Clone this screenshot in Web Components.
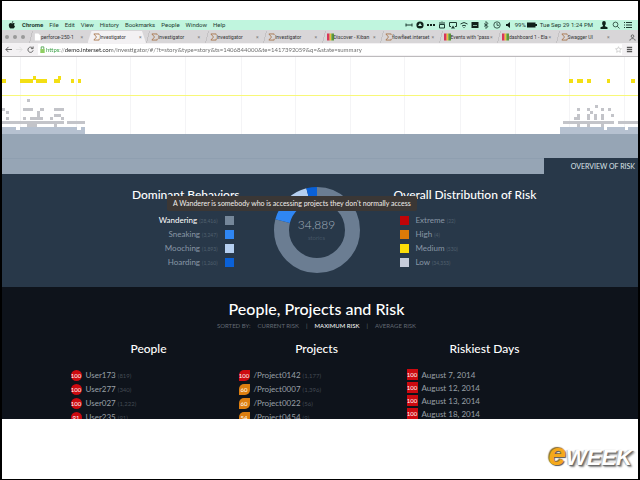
<!DOCTYPE html>
<html lang="en">
<head>
<meta charset="utf-8">
<meta name="viewport" content="width=device-width, initial-scale=1">
<title>Investigator</title>
<style>
  body {
    margin: 0;
    background: #fff;
    font-family: Lato, "Liberation Sans", sans-serif;
  }
</style>
</head>
<body>
<slide-frame>
  <menu-bar></menu-bar>
  <browser-bar></browser-bar>
  <risk-timeline label="OVERVIEW OF RISK"></risk-timeline>
  <risk-overview></risk-overview>
  <risk-ranking></risk-ranking>
  <eweek-logo slot="footer"></eweek-logo>
</slide-frame>

<script>
// Shared helper: every element gets an open shadow root filled with its markup
class BaseElement extends HTMLElement {
    constructor() {
        super();
        this.attachShadow({ mode: 'open' });
    }

    connectedCallback() {
        this.shadowRoot.innerHTML = this.render();
    }
}

// Slide with a black frame, the screen on top and the logo at the bottom
class SlideFrame extends BaseElement {
    render() {
        return `
        <style>
          :host {
            display: flex;
            flex-direction: column;
            box-sizing: border-box;
            height: 100vh;
            border: 1px solid #000;
            border-width: 1px 2px;
            background: #fff;
          }
          .screen {
            flex: 1;
            min-height: 0;
            margin-top: 19px;
            overflow: hidden;
            display: flex;
            flex-direction: column;
          }
          footer {
            box-sizing: border-box;
            height: 60px;
            display: flex;
            align-items: flex-end;
            justify-content: flex-end;
            padding: 0 6px 4px 0;
          }
        </style>
        <main class="screen"><slot></slot></main>
        <footer><slot name="footer"></slot></footer>
      `;
    }
}

// macOS menu bar
class MenuBar extends BaseElement {
    render() {
        const items = ['Chrome', 'File', 'Edit', 'View', 'History', 'Bookmarks', 'People', 'Window', 'Help'];
        return `
        <style>
          :host {
            display: flex;
            flex: none;
            justify-content: space-between;
            align-items: center;
            height: 10px;
            padding: 0 6px;
            background: #c0f5de;
            color: #1d3a30;
            font-family: Roboto, "Liberation Sans", sans-serif;
            font-size: 6px;
            line-height: 10px;
          }
          nav, .status {
            display: flex;
            align-items: center;
            gap: 6px;
          }
          .status { gap: 3px; }
          button {
            all: unset;
            white-space: nowrap;
          }
          button:first-of-type { font-weight: bold; }
          svg {
            width: 8px;
            height: 8px;
            fill: none;
            stroke: #1d3a30;
          }
          .solid { fill: #10211a; stroke: none; }
          .battery { width: 10px; margin-left: -2px; }
          time { margin-right: 4px; }
          time ~ svg + svg { margin-left: 1px; }
        </style>
        <nav aria-label="Menu">
          <svg class="solid" viewBox="0 0 8 8"><path d="M5.3 0C5.3 1 4.6 1.8 3.8 1.8 3.8.9 4.5.2 5.3 0zM6.8 2.7C5.8 3.3 5.9 4.8 7 5.3 6.600 6.500 6 7.600 5.200 7.600c-.5 0-.7-.3-1.200-.3s-.7.3-1.200.3C1.700 7.600.8 5.700.8 4.300c0-1.400 1-2.200 1.900-2.200.6 0 1 .3 1.400.3.4 0 .9-.4 1.600-.4.4 0 .8.2 1.100.7z"/></svg>
          ${items.map(item => `<button type="button">${item}</button>`).join('')}
        </nav>
        <div class="status">
          <svg viewBox="0 0 8 8"><path d="M1 2.500v3M7 2.500v3M1 4h6"/></svg>
          <svg class="solid" viewBox="0 0 8 8"><circle cx="4" cy="4" r="3.600"/><path d="M4 2l2 3H2z" fill="#c0f5de"/></svg>
          <svg class="solid" viewBox="0 0 8 8"><path d="M0 3h2v2H0zM3 3h2v2H3zM6 3h2v2H6z"/></svg>
          <svg viewBox="0 0 8 8"><path d="M1.500 3.500h5v3.500h-5zM2 1v2.500M4 .5v3M6 1v2.500"/></svg>
          <svg viewBox="0 0 8 8"><path d="M2 5.500H.5v-4h7v4H6"/><path d="M4 4.500L6 7.500H2z" fill="#1d3a30" stroke="none"/></svg>
          <svg viewBox="0 0 8 8"><path d="M.5 3Q4 0 7.500 3M2 5Q4 3.500 6 5M3.500 6.500h1"/></svg>
          <svg class="solid" viewBox="0 0 8 8"><path d="M.5 1h7v6h-7z"/><path d="M2 4h4v.7H2z" fill="#c0f5de"/></svg>
          <svg viewBox="0 0 8 8"><path d="M2 2.500l4 3-2 2V.5l2 2-4 3" stroke-width=".8"/></svg>
          <svg viewBox="0 0 8 8"><circle cx="4" cy="4" r="3.200" stroke-width=".8"/><path d="M4 2v2.300h2" stroke-width=".8"/></svg>
          <svg class="solid" viewBox="0 0 8 8"><path d="M2 3h1.500L6 1v6L3.500 5H2z"/></svg>
          <span>99%</span>
          <svg class="battery" viewBox="0 0 10 8"><path d="M0 1.500h8.500v1.500H10v2H8.500v1.500H0z" fill="#10211a" stroke="none"/></svg>
          <time datetime="2015-09-29T13:24">Tue Sep 29 1:24 PM</time>
          <svg class="solid" viewBox="0 0 8 8"><path d="M4 0c2.500 0 2 3.500 1 4.500v.7l2.500 1V8h-7V6.200l2.500-1v-.7C2 3.500 1.500 0 4 0z"/></svg>
          <svg viewBox="0 0 8 8"><circle cx="3.500" cy="3.500" r="2.400" stroke-width=".8"/><path d="M5.300 5.300L7.500 7.500" stroke-width=".8"/></svg>
          <svg viewBox="0 0 8 8"><path d="M0 1.500h1M2 1.500h6M0 4h1M2 4h6M0 6.500h1M2 6.500h6"/></svg>
        </div>
      `;
    }
}

// One browser tab: icon is "page", "sigma" or "bars"
class BrowserTab extends BaseElement {
    render() {
        const icons = {
            page: '<path d="M1 0h4l2 2v6H1z" fill="#fff"/>',
            sigma: '<path d="M7 1.500V.5H1L4 4 1 7.500h6V6" fill="none" stroke="#a8764c"/>',
            bars: '<path d="M0 0h3v8H0z" fill="#d8365a"/><path d="M3 0h2v8H3z" fill="#e9c33a"/><path d="M5 0h3v8H5z" fill="#5a9a3a"/>',
        };
        return `
        <style>
          :host {
            display: flex;
            flex: 1 1 0;
            min-width: 0;
            align-items: center;
            box-sizing: border-box;
            padding: 0 2px 0 5px;
            background: linear-gradient(105deg, transparent 3px, #c4c2c4 3px, #c4c2c4 4px, transparent 4px);
          }
          :host([active]) {
            background: #f3f1f3;
            clip-path: polygon(4px 0, calc(100% - 4px) 0, 100% 100%, 0 100%);
          }
          button { all: unset; }
          .title {
            display: flex;
            flex: 1;
            min-width: 0;
            align-items: center;
            overflow: hidden;
            white-space: nowrap;
          }
          svg { flex: none; width: 7px; height: 8px; }
          .close { width: 5px; color: #777; }
        </style>
        <button type="button" class="title">
          <svg viewBox="0 0 8 8">${icons[this.getAttribute('icon')]}</svg>
          <span><slot></slot></span>
        </button>
        <button type="button" class="close" aria-label="Close tab">×</button>
      `;
    }
}

// Tab strip and address bar
class BrowserBar extends BaseElement {
    render() {
        return `
        <style>
          :host {
            display: block;
            flex: none;
            border-bottom: 1px solid #bdbbbd;
            color: #333;
            font-family: Roboto, "Liberation Sans", sans-serif;
            font-size: 5px;
            line-height: 12px;
          }
          .tabs {
            display: flex;
            height: 13px;
            padding: 1px 2px 0 3px;
            box-sizing: border-box;
            background: #d8d6d8;
          }
          .lights {
            display: flex;
            align-items: center;
            gap: 4px;
            width: 24px;
          }
          .lights i {
            width: 4px;
            height: 4px;
            border-radius: 50%;
            background: #999;
          }
          .profile {
            display: flex;
            justify-content: flex-end;
            align-items: center;
            width: 22px;
          }
          .address {
            display: flex;
            align-items: center;
            gap: 4px;
            height: 13px;
            padding: 0 5px 0 3px;
            background: #f3f1f3;
          }
          button { all: unset; display: flex; }
          label {
            display: flex;
            flex: 1;
            align-items: center;
            padding-left: 1px;
            background: #fff;
          }
          input {
            all: unset;
            flex: 1;
            height: 11px;
            font-family: Lato, "Liberation Sans", sans-serif;
            font-size: 6px;
            color: #666;
            background: linear-gradient(90deg, #2f9a3c 14px, #888 14px, #888 19px, #222 19px, #222 65px, #666 65px);
            background-clip: text;
            -webkit-text-fill-color: transparent;
          }
          svg {
            width: 7px;
            height: 7px;
            fill: none;
            stroke: #555;
          }
        </style>
        <div class="tabs">
          <div class="lights"><i></i><i></i><i></i></div>
          <browser-tab icon="page">perforce-250-1</browser-tab>
          <browser-tab icon="sigma" active>Investigator</browser-tab>
          <browser-tab icon="sigma">Investigator</browser-tab>
          <browser-tab icon="sigma">Investigator</browser-tab>
          <browser-tab icon="sigma">Investigator</browser-tab>
          <browser-tab icon="bars">Discover - Kiban</browser-tab>
          <browser-tab icon="sigma">flowfleet.interset</browser-tab>
          <browser-tab icon="bars">Events with "pass</browser-tab>
          <browser-tab icon="bars">dashboard 1 - Ela</browser-tab>
          <browser-tab icon="sigma">Swagger UI</browser-tab>
          <div class="profile">
            <svg viewBox="0 0 8 8"><circle cx="4" cy="2.500" r="1.500"/><path d="M1 7.500c0-3 6-3 6 0"/></svg>
          </div>
        </div>
        <div class="address">
          <button type="button" aria-label="Back"><svg viewBox="0 0 8 8"><path d="M8 4H1M4 1L1 4l3 3"/></svg></button>
          <button type="button" aria-label="Forward"><svg viewBox="0 0 8 8"><path d="M0 4h7M4 1l3 3-3 3" stroke="#ddd"/></svg></button>
          <button type="button" aria-label="Reload"><svg viewBox="0 0 8 8"><path d="M6.500 2.500A3 3 0 1 0 7 5M7 .5v2.500H4.500"/></svg></button>
          <label for="url">
            <svg viewBox="0 0 8 8"><path d="M2.500 4V1h3v3" stroke="#4ea24e"/><path d="M1.500 3.500h5V8h-5z" fill="#8fce62" stroke="none"/></svg>
            <input id="url" type="text" aria-label="Address" value="https://demo.interset.com/investigator/#/?t=story&amp;type=story&amp;ts=1406844000&amp;te=1417392059&amp;q=&amp;state=summary">
            <svg viewBox="0 0 8 8"><path d="M4 .8l1 2.200 2.400.2-1.800 1.600.5 2.400L4 6 1.900 7.200l.5-2.400L.6 3.200 3 3z" stroke="#bbb" stroke-width=".7"/></svg>
          </label>
          <button type="button" aria-label="Menu"><svg viewBox="0 0 8 8"><path d="M1 1.500h6M1 4h6M1 6.500h6" stroke-width="1.500"/></svg></button>
        </div>
      `;
    }
}

// Event scatter over time, with the volume band below it
class RiskTimeline extends BaseElement {
    // rows of [y, [x, width], ...]
    cells(rows, color, height = 3) {
        return rows.map(([y, ...runs]) =>
            runs.map(([x, w]) => `<rect x="${x}" y="${y}" width="${w}" height="${height}" fill="${color}"/>`).join('')
        ).join('');
    }

    render() {
        const medium = [
            [19, [31, 3], [56, 3]],
            [22, [0, 4], [18, 13], [34, 11], [52, 6], [69, 3], [76, 3], [567, 4], [575, 6], [585, 4], [605, 3], [629, 4]],
        ];
        const low = [
            [42, [25, 3]],
            [48, [593, 3]],
            [51, [0, 3], [21, 10], [38, 4], [52, 10], [575, 3], [585, 3], [599, 3], [606, 3]],
            [54, [4, 3], [35, 3], [588, 3]],
            [57, [35, 3], [52, 7], [575, 3], [585, 3], [592, 3], [599, 3], [609, 3]],
            [60, [4, 3], [21, 3], [28, 13], [48, 3], [59, 3], [572, 6], [585, 3], [592, 3], [599, 3]],
            [64, [0, 62], [65, 18], [561, 51], [616, 20]],
            [67, [25, 10], [52, 3], [575, 3], [585, 3], [599, 3]],
        ];
        const base = [
            [70, [0, 14], [18, 57], [79, 4], [558, 44], [605, 18], [626, 10]],
            [73, [0, 83], [558, 78]],
        ];
        const grid = [18, 74, 128, 183, 239, 293, 348, 402, 458, 513, 567, 622];
        return `
        <style>
          :host { display: block; flex: none; }
          svg {
            display: block;
            width: 100%;
            height: 77px;
            background: #fff;
          }
          .band {
            display: flex;
            align-items: flex-end;
            justify-content: flex-end;
            height: 40px;
            background: linear-gradient(#96a5b5 24px, #8f9fb0 24px, #8f9fb0 25px, #96a5b5 25px);
          }
          h2 {
            margin: 0;
            padding: 0 3px 0 27px;
            background: #283849;
            color: #dfe5ea;
            font-size: 7px;
            font-weight: 400;
            line-height: 16px;
          }
        </style>
        <svg viewBox="0 0 636 77" preserveAspectRatio="none" shape-rendering="crispEdges">
          ${grid.map(x => `<path d="M${x + .5} 0v77" stroke="#f4f4f6"/>`).join('')}
          <path d="M0 38h636v1H0z" fill="#f8f878"/>
          ${this.cells(medium, '#f3df14', 4)}
          ${this.cells(low, '#c3c4c9')}
          ${this.cells(base, '#b6c1d0', 4)}
        </svg>
        <div class="band"><h2>${this.getAttribute('label')}</h2></div>
      `;
    }
}

// Legend entry, set reversed to put the swatch at the end
class LegendItem extends BaseElement {
    render() {
        return `
        <style>
          :host {
            display: flex;
            align-items: center;
            gap: 7px;
            height: 14px;
            color: #8997a6;
            font-size: 8px;
            line-height: 14px;
          }
          :host([reversed]) { flex-direction: row-reverse; }
          :host([selected]) { color: #fff; }
          i {
            width: 9px;
            height: 9px;
            background: ${this.getAttribute('color')};
          }
          small { color: #51606f; font-size: 5px; }
        </style>
        <i></i>
        <span><slot></slot> <small>(${this.getAttribute('count')})</small></span>
      `;
    }
}

// Ring chart with the total in its middle
class DonutChart extends BaseElement {
    render() {
        const slices = [
            { color: '#6b7d92', from: 0, size: 79 },
            { color: '#2f86f3', from: 79, size: 9 },
            { color: '#b5cff0', from: 88, size: 8 },
            { color: '#0a61d8', from: 96, size: 4 },
        ];
        return `
        <style>
          :host {
            display: grid;
            place-items: center;
            align-self: start;
            color: #a3afbc;
          }
          svg, .total { grid-area: 1 / 1; }
          svg { width: 86px; height: 86px; }
          circle { fill: none; stroke-width: 15; }
          .total {
            display: flex;
            flex-direction: column;
            align-items: center;
            font-size: 12px;
            font-weight: 300;
            line-height: 16px;
          }
          small { color: #5c6b7b; font-size: 6px; line-height: 10px; }
        </style>
        <svg viewBox="0 0 86 86">
          <g transform="rotate(-90 43 43)">
            ${slices.map(s => `<circle cx="43" cy="43" r="35.500" pathLength="100" stroke="${s.color}" stroke-dasharray="${s.size} 100" stroke-dashoffset="${-s.from}"/>`).join('')}
          </g>
        </svg>
        <div class="total">${this.getAttribute('total')}<small>${this.getAttribute('unit')}</small></div>
      `;
    }
}

class RiskOverview extends BaseElement {
    render() {
        return `
        <style>
          :host {
            display: grid;
            flex: none;
            position: relative;
            grid-template-columns: 1fr 86px 1fr;
            column-gap: 34px;
            padding: 13px 7px 14px 0;
            background: #283849;
          }
          section { display: flex; flex-direction: column; }
          .behaviors { align-items: flex-end; }
          h3 {
            margin: 0 0 10px;
            color: #fff;
            font-size: 12px;
            font-weight: 500;
            line-height: 16px;
          }
          .legend { padding: 0 6px; }
          /* hover hint, lies over the headings and the ring */
          .tooltip {
            position: absolute;
            top: 22px;
            left: 50%;
            margin-left: -153px;
            padding: 0 6px;
            border-radius: 2px;
            background: #3b3735;
            color: #f0eeec;
            font-size: 7px;
            line-height: 15px;
            white-space: nowrap;
          }
        </style>
        <section class="behaviors">
          <h3>Dominant Behaviors</h3>
          <div class="legend">
            <legend-item reversed selected color="#75879a" count="28,416">Wandering</legend-item>
            <legend-item reversed color="#2f86f3" count="3,247">Sneaking</legend-item>
            <legend-item reversed color="#b5cff0" count="1,893">Mooching</legend-item>
            <legend-item reversed color="#0a61d8" count="1,260">Hoarding</legend-item>
          </div>
        </section>
        <donut-chart total="34,889" unit="stories"></donut-chart>
        <section>
          <h3>Overall Distribution of Risk</h3>
          <div class="legend">
            <legend-item color="#c00408" count="22">Extreme</legend-item>
            <legend-item color="#dc7a08" count="4">High</legend-item>
            <legend-item color="#fbdc08" count="530">Medium</legend-item>
            <legend-item color="#c6ccda" count="34,353">Low</legend-item>
          </div>
        </section>
        <div class="tooltip" role="tooltip">A Wanderer is somebody who is accessing projects they don't normally access</div>
      `;
    }
}

// Ranked entry: score badge, name and number of events
class RankItem extends BaseElement {
    render() {
        const score = this.getAttribute('score');
        const count = this.getAttribute('count');
        const radius = { circle: '50%', leaf: '5px 0 5px 0', square: '0' }[this.getAttribute('shape')];
        return `
        <style>
          :host {
            display: flex;
            align-items: center;
            gap: 4px;
            height: ${count ? 14 : 13}px;
            color: #9aa0a8;
            font-size: 8px;
          }
          b {
            width: 11px;
            height: 11px;
            border-radius: ${radius};
            background: ${Number(score) > 90 ? '#cc0a10' : '#dc7e10'};
            color: #fff;
            font-size: 6px;
            font-weight: 400;
            line-height: 11px;
            text-align: center;
          }
          small { color: #434a53; font-size: 6px; }
        </style>
        <b>${score}</b>
        <span><slot></slot>${count ? ` <small>(${count})</small>` : ''}</span>
      `;
    }
}

class RiskRanking extends BaseElement {
    render() {
        return `
        <style>
          :host {
            display: block;
            flex: 1;
            padding: 12px 7px 0 0;
            background: #0e131b;
            color: #fff;
            text-align: center;
          }
          h2, h3 { margin: 0; font-weight: 500; }
          h2 { font-size: 16px; line-height: 20px; }
          h3 { margin-bottom: 11px; font-size: 12px; line-height: 16px; }
          .sort {
            display: flex;
            justify-content: center;
            gap: 7px;
            margin: 2px 0 10px;
            color: #626973;
            font-size: 6px;
            line-height: 10px;
          }
          .sort button { all: unset; }
          .sort .current { color: #fff; }
          .columns {
            display: grid;
            grid-template-columns: repeat(3, 168px);
            justify-content: center;
          }
          .list { padding-left: 6px; }
        </style>
        <h2>People, Projects and Risk</h2>
        <div class="sort">
          <span>SORTED BY:</span>
          <button type="button">CURRENT RISK</button><span>|</span>
          <button type="button" class="current">MAXIMUM RISK</button><span>|</span>
          <button type="button">AVERAGE RISK</button>
        </div>
        <div class="columns">
          <section>
            <h3>People</h3>
            <div class="list">
              <rank-item shape="circle" score="100" count="819">User173</rank-item>
              <rank-item shape="circle" score="100" count="340">User277</rank-item>
              <rank-item shape="circle" score="100" count="1,222">User027</rank-item>
              <rank-item shape="circle" score="91" count="91">User235</rank-item>
            </div>
          </section>
          <section>
            <h3>Projects</h3>
            <div class="list">
              <rank-item shape="leaf" score="100" count="1,177">/Project0142</rank-item>
              <rank-item shape="leaf" score="60" count="1,396">/Project0007</rank-item>
              <rank-item shape="leaf" score="60" count="56">/Project0022</rank-item>
              <rank-item shape="leaf" score="54" count="9">/Project0454</rank-item>
            </div>
          </section>
          <section>
            <h3>Riskiest Days</h3>
            <div class="list">
              <rank-item shape="square" score="100">August 7, 2014</rank-item>
              <rank-item shape="square" score="100">August 12, 2014</rank-item>
              <rank-item shape="square" score="100">August 13, 2014</rank-item>
              <rank-item shape="square" score="100">August 18, 2014</rank-item>
            </div>
          </section>
        </div>
      `;
    }
}

class EweekLogo extends BaseElement {
    render() {
        return `
        <style>
          :host {
            display: block;
            color: #fff;
            font: italic bold 22px/34px "Liberation Sans Narrow", "Liberation Sans", sans-serif;
            text-shadow: 1px 1px 1px #666, -1px 0 1px #bbb, 2px 2px 2px #888;
          }
          span {
            color: #f5a81c;
            font-size: 32px;
            text-shadow: 1px 1px 1px #555, -1px -1px 1px #8a6a30;
          }
        </style>
        <span>e</span>WEEK
      `;
    }
}

customElements.define('slide-frame', SlideFrame);
customElements.define('menu-bar', MenuBar);
customElements.define('browser-tab', BrowserTab);
customElements.define('browser-bar', BrowserBar);
customElements.define('risk-timeline', RiskTimeline);
customElements.define('legend-item', LegendItem);
customElements.define('donut-chart', DonutChart);
customElements.define('risk-overview', RiskOverview);
customElements.define('rank-item', RankItem);
customElements.define('risk-ranking', RiskRanking);
customElements.define('eweek-logo', EweekLogo);
</script>
</body>
</html>
